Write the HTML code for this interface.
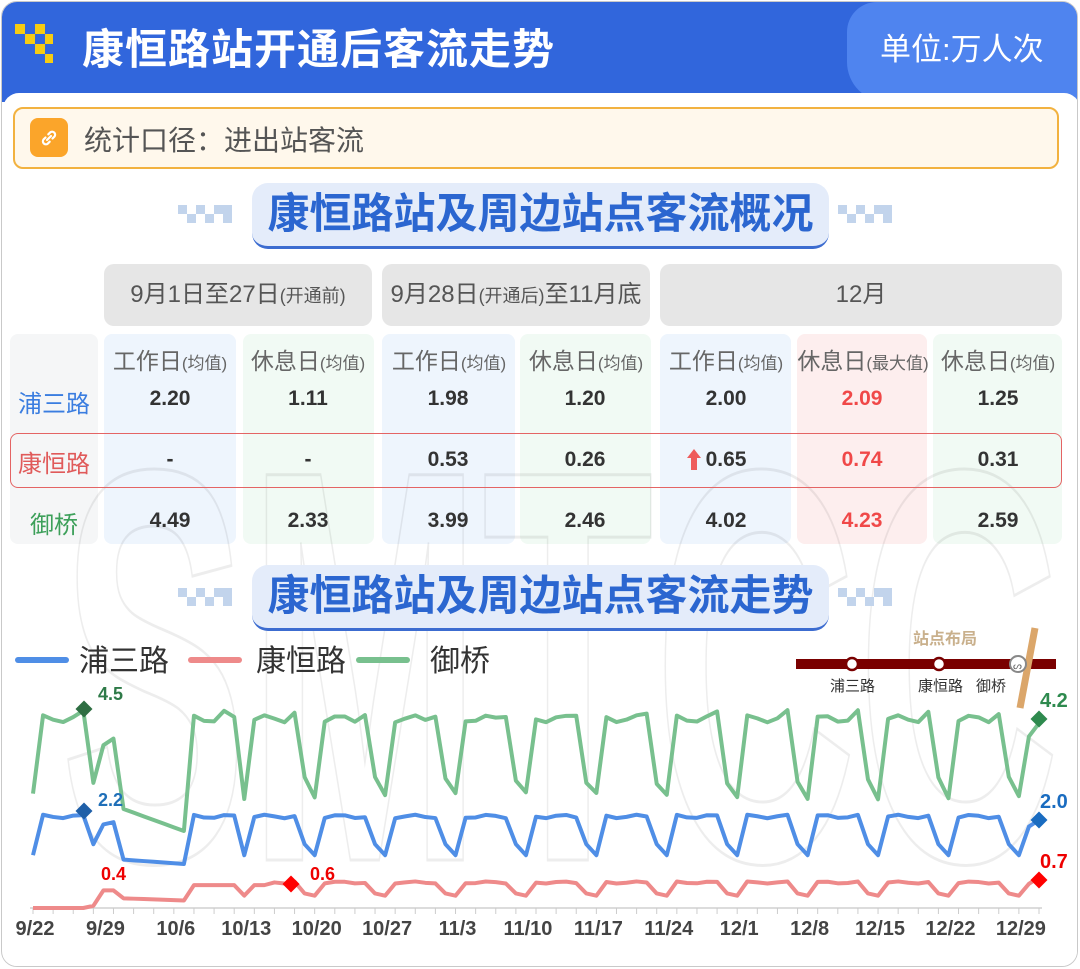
<!DOCTYPE html>
<html><head><meta charset="utf-8">
<style>
*{margin:0;padding:0;box-sizing:border-box}
body{width:1080px;height:969px;background:#fff;position:relative;overflow:hidden;font-family:"Liberation Sans","Noto Sans CJK SC",sans-serif}
.a{position:absolute}
.card{left:1px;top:1px;width:1077px;height:966px;border:1px solid #c9c9c9;border-radius:16px;background:#fff;overflow:hidden}
.hdr{left:0;top:0;width:1080px;height:100px;background:#3166dc}
.tab{left:845px;top:0;width:240px;height:100px;background:#4f84ef;border-bottom-left-radius:40px;border-top-left-radius:30px}
.panel{left:1px;top:91px;width:1077px;height:876px;background:#fff;border-radius:16px 16px 0 0}
.title{left:82px;top:16px;color:#fff;font-size:42px;font-weight:bold;letter-spacing:1px}
.unit{left:880px;top:24px;color:#fff;font-size:31px}
.note{left:13px;top:107px;width:1046px;height:62px;background:#fff8ec;border:2px solid #f2b240;border-radius:10px}
.nicon{left:30px;top:118px;width:38px;height:39px;background:#fba52a;border-radius:8px}
.ntext{left:84px;top:119px;font-size:28px;color:#555}
.pill{left:252px;width:577px;height:66px;background:#e4ecfa;border-radius:16px;border-bottom:3px solid #3c6cd0;color:#2b66d0;font-size:42px;font-weight:bold;text-align:center;line-height:62px}
.gh{top:264px;height:62px;background:#e6e6e6;border-radius:10px;color:#555;font-size:24px;text-align:center;line-height:62px}
.gh small{font-size:18px}
.col{top:334px;height:210px;border-radius:8px}
.ch{top:342px;font-size:23px;color:#666;text-align:center;width:140px}
.ch small{font-size:17px}
.v{font-size:21px;font-weight:bold;color:#333;text-align:center;width:130px}
.r{color:#f04848}
.rl{font-size:24px;text-align:center;width:88px;left:10px}
</style></head><body>
<div class="a card">
<div class="a hdr"></div>
<div class="a tab"></div>
<div class="a panel"></div>
</div>
<svg class="a" style="left:15px;top:24px" width="40" height="40" viewBox="0 0 40 40">
<g fill="#f6cc12"><rect x="0" y="0" width="10" height="10"/><rect x="10" y="10" width="10" height="10"/><rect x="20" y="0" width="10" height="10"/><rect x="20" y="20" width="10" height="10"/><rect x="30" y="10" width="8" height="10"/><rect x="30" y="30" width="8" height="9"/></g></svg>
<div class="a title">康恒路站开通后客流走势</div>
<div class="a unit">单位:万人次</div>
<div class="a note"></div>
<div class="a nicon"></div>
<svg class="a" style="left:36px;top:125px" width="26" height="26" viewBox="0 0 26 26" fill="none" stroke="#fff" stroke-width="2.2" stroke-linecap="round"><path d="M11 15l4-4M9.5 12.5l-2 2a3 3 0 0 0 4.2 4.2l2-2M16.5 13.5l2-2a3 3 0 0 0-4.2-4.2l-2 2"/></svg>
<div class="a ntext">统计口径：进出站客流</div>

<svg class="a" style="left:178px;top:205px" width="60" height="20"><g fill="#c2d4ec"><rect x="0" y="0" width="9" height="9"/><rect x="9" y="9" width="9" height="9"/><rect x="18" y="0" width="9" height="9"/><rect x="27" y="9" width="9" height="9"/><rect x="36" y="0" width="9" height="9"/><rect x="45" y="9" width="9" height="9"/><rect x="45" y="0" width="9" height="9"/></g></svg>
<svg class="a" style="left:838px;top:205px" width="60" height="20"><g fill="#c2d4ec"><rect x="0" y="0" width="9" height="9"/><rect x="9" y="9" width="9" height="9"/><rect x="18" y="0" width="9" height="9"/><rect x="27" y="9" width="9" height="9"/><rect x="36" y="0" width="9" height="9"/><rect x="45" y="9" width="9" height="9"/><rect x="45" y="0" width="9" height="9"/></g></svg>
<div class="a pill" style="top:183px">康恒路站及周边站点客流概况</div>

<div class="a gh" style="left:104px;width:268px">9月1日至27日<small>(开通前)</small></div>
<div class="a gh" style="left:382px;width:268px">9月28日<small>(开通后)</small>至11月底</div>
<div class="a gh" style="left:660px;width:402px">12月</div>

<div class="a col" style="left:10px;width:88px;background:#f5f6f7"></div>
<div class="a col" style="left:104px;width:132px;background:#eef5fd"></div>
<div class="a col" style="left:243px;width:131px;background:#f1faf4"></div>
<div class="a col" style="left:382px;width:133px;background:#eef5fd"></div>
<div class="a col" style="left:520px;width:131px;background:#f1faf4"></div>
<div class="a col" style="left:660px;width:131px;background:#eef5fd"></div>
<div class="a col" style="left:797px;width:130px;background:#fdeeee"></div>
<div class="a col" style="left:933px;width:129px;background:#f1faf4"></div>

<svg class="a" style="left:0;top:0" width="1080" height="969"><g font-family="Liberation Sans" font-size="560" font-weight="bold" fill="none" stroke="#000" stroke-opacity="0.07" stroke-width="3"><text x="60" y="860" textLength="1000" lengthAdjust="spacingAndGlyphs">SMTCC</text></g></svg>

<div class="a ch" style="left:100px">工作日<small>(均值)</small></div>
<div class="a ch" style="left:238px">休息日<small>(均值)</small></div>
<div class="a ch" style="left:379px">工作日<small>(均值)</small></div>
<div class="a ch" style="left:516px">休息日<small>(均值)</small></div>
<div class="a ch" style="left:656px">工作日<small>(均值)</small></div>
<div class="a ch" style="left:793px">休息日<small>(最大值)</small></div>
<div class="a ch" style="left:928px">休息日<small>(均值)</small></div>

<div class="a" style="left:10px;top:433px;width:1052px;height:55px;border:1.5px solid #e46464;border-radius:8px"></div>

<div class="a rl" style="top:384px;color:#3a7de0">浦三路</div>
<div class="a rl" style="top:444px;color:#e05a5a">康恒路</div>
<div class="a rl" style="top:505px;color:#3da05a">御桥</div>

<div class="a v" style="left:105px;top:387px">2.20</div>
<div class="a v" style="left:243px;top:387px">1.11</div>
<div class="a v" style="left:383px;top:387px">1.98</div>
<div class="a v" style="left:520px;top:387px">1.20</div>
<div class="a v" style="left:661px;top:387px">2.00</div>
<div class="a v r" style="left:797px;top:387px">2.09</div>
<div class="a v" style="left:933px;top:387px">1.25</div>

<div class="a v" style="left:105px;top:448px">-</div>
<div class="a v" style="left:243px;top:448px">-</div>
<div class="a v" style="left:383px;top:448px">0.53</div>
<div class="a v" style="left:520px;top:448px">0.26</div>
<div class="a v" style="left:661px;top:448px">0.65</div>
<svg class="a" style="left:686px;top:448px" width="16" height="24"><path d="M8 1L15 10H11V22H5V10H1Z" fill="#ee5c5c"/></svg>
<div class="a v r" style="left:797px;top:448px">0.74</div>
<div class="a v" style="left:933px;top:448px">0.31</div>

<div class="a v" style="left:105px;top:509px">4.49</div>
<div class="a v" style="left:243px;top:509px">2.33</div>
<div class="a v" style="left:383px;top:509px">3.99</div>
<div class="a v" style="left:520px;top:509px">2.46</div>
<div class="a v" style="left:661px;top:509px">4.02</div>
<div class="a v r" style="left:797px;top:509px">4.23</div>
<div class="a v" style="left:933px;top:509px">2.59</div>

<svg class="a" style="left:178px;top:588px" width="60" height="20"><g fill="#c2d4ec"><rect x="0" y="0" width="9" height="9"/><rect x="9" y="9" width="9" height="9"/><rect x="18" y="0" width="9" height="9"/><rect x="27" y="9" width="9" height="9"/><rect x="36" y="0" width="9" height="9"/><rect x="45" y="9" width="9" height="9"/><rect x="45" y="0" width="9" height="9"/></g></svg>
<svg class="a" style="left:838px;top:588px" width="60" height="20"><g fill="#c2d4ec"><rect x="0" y="0" width="9" height="9"/><rect x="9" y="9" width="9" height="9"/><rect x="18" y="0" width="9" height="9"/><rect x="27" y="9" width="9" height="9"/><rect x="36" y="0" width="9" height="9"/><rect x="45" y="9" width="9" height="9"/><rect x="45" y="0" width="9" height="9"/></g></svg>
<div class="a pill" style="top:565px">康恒路站及周边站点客流走势</div>

<svg class="a" style="left:0;top:640px" width="520" height="45" font-family="Liberation Sans,Noto Sans CJK SC,sans-serif" font-size="30" fill="#333">
<line x1="18" y1="20" x2="66" y2="20" stroke="#4f8ee6" stroke-width="6" stroke-linecap="round"/><text x="79" y="31">浦三路</text>
<line x1="191" y1="20" x2="239" y2="20" stroke="#ee8a8a" stroke-width="6" stroke-linecap="round"/><text x="256" y="31">康恒路</text>
<line x1="359" y1="20" x2="407" y2="20" stroke="#78c08e" stroke-width="6" stroke-linecap="round"/><text x="430" y="31">御桥</text>
</svg>

<svg class="a" style="left:780px;top:622px" width="300" height="90" font-family="Liberation Sans,Noto Sans CJK SC,sans-serif">
<text x="133" y="22" font-size="16" font-weight="bold" fill="#c9b08c">站点布局</text>
<rect x="16" y="37" width="260" height="10" fill="#7a0000"/>
<line x1="255" y1="6" x2="240" y2="86" stroke="#dba66a" stroke-width="7"/>
<circle cx="72" cy="42" r="6" fill="#fff" stroke="#7a0000" stroke-width="2.5"/>
<circle cx="159" cy="42" r="6" fill="#fff" stroke="#7a0000" stroke-width="2.5"/>
<circle cx="238" cy="42" r="8" fill="#fff" stroke="#888" stroke-width="2"/>
<text x="233" y="47" font-size="10" fill="#666">ᔕ</text>
<text x="50" y="69" font-size="15" fill="#333">浦三路</text>
<text x="138" y="69" font-size="15" fill="#333">康恒路</text>
<text x="196" y="69" font-size="15" fill="#333">御桥</text>
</svg>

<svg id="ch" class="a" style="left:0;top:0" width="1080" height="969" font-family="Liberation Sans,sans-serif"></svg>
<script>
(function(){
var svg=document.getElementById('ch'),N=101,g=[],b=[],r=[];
function X(d){return 33+d*10.06}function Y(v){return 908-44*v}
for(var d=0;d<N;d++){
 var w=d%7,work=(w>=1&&w<=5),hol=(d>=9&&d<=15);
 if(d==7||d==20)work=true;
 var n=Math.sin(d*1.7)*0.08;
 var gv,bv,rv;
 if(hol){var t=(d-9)/6;gv=2.25-0.5*t;bv=1.1-0.1*t;rv=0.22-0.05*t;}
 else if(work){gv=4.3+n+(w==5?0.12:0);bv=2.08+n*0.5;rv=0.58+n*0.3;}
 else if(w==6){gv=2.9+n;bv=1.45;rv=0.33;}
 else{gv=2.55+n;bv=1.2;rv=0.28;}
 if(d==0){gv=2.6;bv=1.2;}
 if(d==7){gv=3.7;bv=1.9}if(d==8){gv=3.85;bv=1.95}
 if(d<6)rv=0; if(d==6)rv=0.05; if(d==7||d==8)rv=0.4; if(d>15&&d<24&&work)rv=0.52;
 if(d==26)rv=0.6;
 if(d==100){gv=4.2;bv=2.0;rv=0.7}
 if(d==99){gv=3.9;bv=1.85;rv=0.55}
 g.push(X(d)+','+Y(gv));b.push(X(d)+','+Y(bv));r.push(X(d)+','+Y(rv));
}
var h='<line x1="30" y1="908" x2="1042" y2="908" stroke="#d0d0d0" stroke-width="1.5"/>';
for(var d=0;d<=100;d+=2)h+='<line x1="'+X(d)+'" y1="908" x2="'+X(d)+'" y2="914" stroke="#ccc"/>';
var L=['9/22','9/29','10/6','10/13','10/20','10/27','11/3','11/10','11/17','11/24','12/1','12/8','12/15','12/22','12/29'];
for(var i=0;i<L.length;i++)h+='<text x="'+(X(i*7)+2)+'" y="935" text-anchor="middle" font-size="20" font-weight="bold" fill="#444">'+L[i]+'</text>';
h+='<polyline points="'+r.join(' ')+'" fill="none" stroke="#ee8a8a" stroke-width="4" stroke-linejoin="round"/>';
h+='<polyline points="'+b.join(' ')+'" fill="none" stroke="#4f8ee6" stroke-width="4" stroke-linejoin="round"/>';
h+='<polyline points="'+g.join(' ')+'" fill="none" stroke="#78c08e" stroke-width="4" stroke-linejoin="round"/>';
function dia(x,y,c){return '<rect x="'+(x-6)+'" y="'+(y-6)+'" width="12" height="12" fill="'+c+'" transform="rotate(45 '+x+' '+y+')"/>'}
h+=dia(84,709,'#2e6e42')+dia(84,811,'#1f5fa8')+dia(291,884,'#f00')+dia(1039,719,'#2e8a4e')+dia(1039,820,'#1a6cc0')+dia(1039,880,'#f00');
h+='<text x="98" y="700" font-size="18" font-weight="bold" fill="#2e7a48">4.5</text>';
h+='<text x="98" y="806" font-size="18" font-weight="bold" fill="#1f6fb8">2.2</text>';
h+='<text x="101" y="880" font-size="18" font-weight="bold" fill="#e00">0.4</text>';
h+='<text x="310" y="880" font-size="18" font-weight="bold" fill="#e00">0.6</text>';
h+='<text x="1040" y="707" font-size="20" font-weight="bold" fill="#2e8a4e">4.2</text>';
h+='<text x="1040" y="808" font-size="20" font-weight="bold" fill="#1a6cc0">2.0</text>';
h+='<text x="1040" y="868" font-size="20" font-weight="bold" fill="#e00">0.7</text>';
svg.innerHTML=h;
})();
</script>
</body></html>
